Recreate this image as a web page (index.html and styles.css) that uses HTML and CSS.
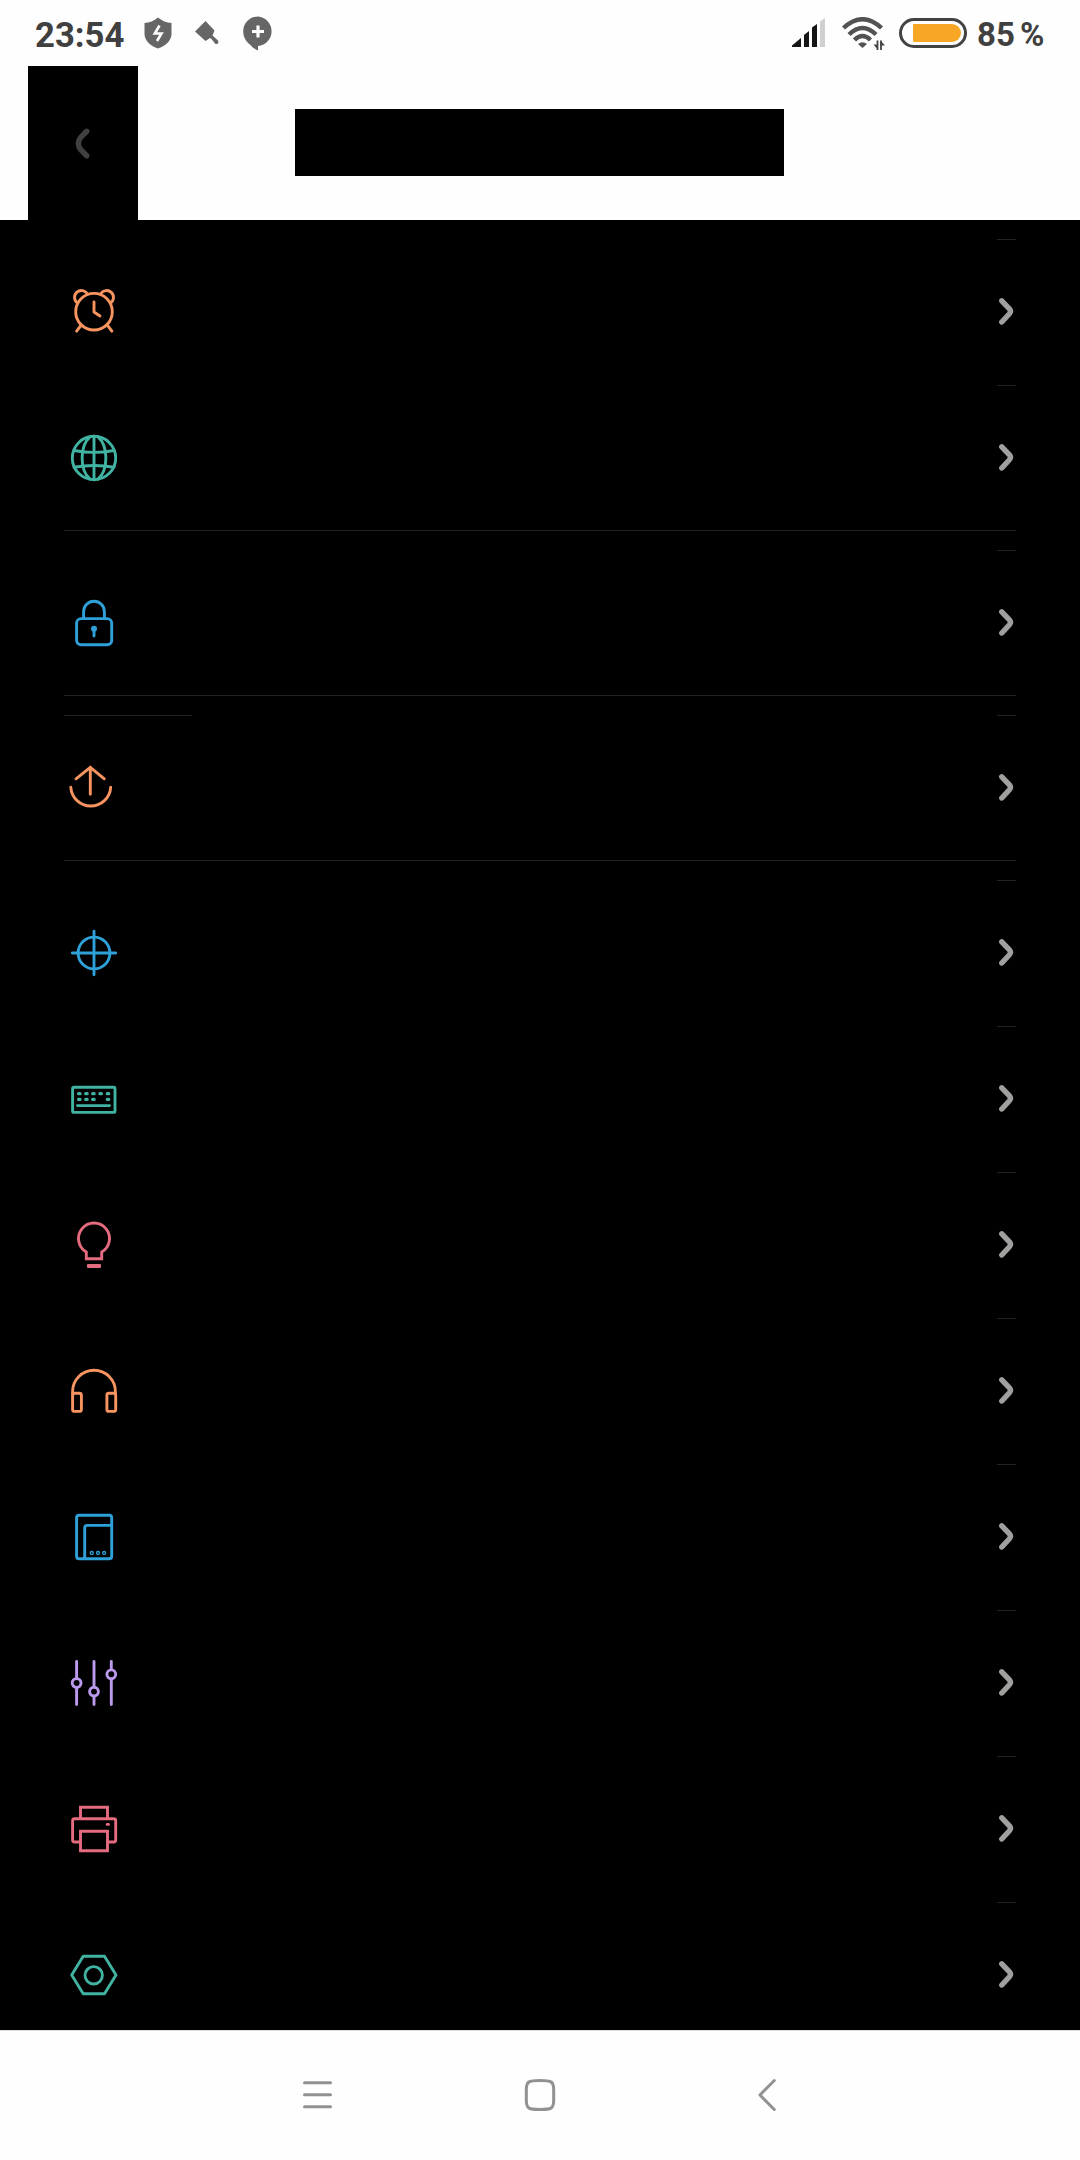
FILE: index.html
```html
<!DOCTYPE html>
<html lang="en">
<head>
    <meta charset="UTF-8">
    <meta name="viewport" content="width=device-width, initial-scale=1.0">
    <title>Settings</title>
    <link rel="stylesheet" href="styles.css">
</head>
<body>
    <!-- Status bar -->
    <div class="status-bar">
        <span class="clock">23:54</span>
        <svg class="shield" width="28" height="32" viewBox="0 0 28 32">
            <path d="M14 0.500C18 4 22.500 5.500 27.500 6V17C27.500 24 21 29 14 31.500C7 29 0.500 24 0.500 17V6C5.500 5.500 10 4 14 0.500Z" fill="#666"/>
            <path d="M15.500 8.500L10.800 16.500H17.500L13 24" fill="none" stroke="#fefefe" stroke-width="2.600"/>
        </svg>
        <svg class="brush" width="26" height="26" viewBox="0 0 26 26">
            <path d="M11.500 1L20.500 10.500L18.500 15.500L24 20.500Q25.500 24.500 21.500 24L17 18.500L16 18L11.500 21L1 11.500Z" fill="#666"/>
        </svg>
        <svg class="bubble" width="30" height="35" viewBox="0 0 30 35">
            <path d="M15 0.500A14.800 14.800 0 0 1 15 30V34.500C12 33.500 9 31 7.500 29C3 26 0.200 21 0.200 15.300A14.800 14.800 0 0 1 15 0.500Z" fill="#666"/>
            <path d="M15 9.500V21.500M9 15.500H21" stroke="#fefefe" stroke-width="3.200"/>
        </svg>
        <div class="spacer"></div>
        <svg class="signal" width="34" height="30" viewBox="0 0 34 30">
            <path d="M0 29V27.500L9 20V29ZM12 29V17L17 13V29ZM20 29V9.500L25 6V29Z" fill="#151515"/>
            <path d="M28 29V3.500L33 0V29Z" fill="#d0d0d0"/>
        </svg>
        <svg class="wifi" width="44" height="34" viewBox="0 0 44 34">
            <g fill="none" stroke="#525252" stroke-width="4.400">
                <path d="M2.500 11Q21.500 -6.500 40.500 11"/>
                <path d="M8 17.500Q21.500 4.500 35 17.500"/>
                <path d="M13.500 23Q21.500 15 29.500 23"/>
            </g>
            <path d="M17 27Q21.500 23.500 26 27L21.500 31Z" fill="#525252"/>
            <path d="M36.500 23.500V33M40 33V23.500" stroke="#444" stroke-width="1.800"/>
            <path d="M32.500 27.500H37V33ZM39.500 23.500L44 28.500H39.500Z" fill="#444"/>
        </svg>
        <svg class="battery" width="68" height="30" viewBox="0 0 68 30">
            <rect x="1.500" y="1.500" width="65" height="27" rx="13.500" fill="none" stroke="#424242" stroke-width="3"/>
            <path d="M15 6H53A9 9 0 0 1 53 24H15Q14 24 14 23V7Q14 6 15 6Z" fill="#f7a723"/>
        </svg>
        <span class="percent">85 %</span>
    </div>

    <!-- Title bar -->
    <div class="header">
        <div class="back">
            <svg width="20" height="34" viewBox="0 0 20 34">
                <path d="M14.700 5.300L9 11Q3.700 17.500 9 24L14.700 29.700" fill="none" stroke="#404040" stroke-width="5.500" stroke-linecap="round"/>
            </svg>
        </div>
        <div class="title"></div>
    </div>

    <!-- Chevron shared by all rows -->
    <svg class="defs">
        <symbol id="chevron" viewBox="0 0 19 30">
            <path d="M4.800 3.800L12.400 11.800Q14.600 14.300 12.400 16.800L4.800 25" fill="none" stroke="#a0a09e" stroke-width="5.400" stroke-linecap="round"/>
        </symbol>
    </svg>

    <div class="settings">
        <div class="group">
            <div class="row">
                <div class="icon orange">
                    <svg viewBox="0 0 48 48">
                        <circle cx="24" cy="23.700" r="18.300"/>
                        <path d="M7.500 15.100A6.900 6.900 0 1 1 17.300 5.800M40.500 15.100A6.900 6.900 0 1 0 30.700 5.800"/>
                        <path d="M24 14V24L30 28M11.300 37L6.600 43.200M37.200 37L41.900 43.200"/>
                    </svg>
                </div>
                <div class="arrow"><svg><use href="#chevron"/></svg></div>
            </div>
            <div class="row">
                <div class="icon green">
                    <svg viewBox="0 0 48 48">
                        <circle cx="24" cy="24" r="21.700"/>
                        <path d="M24 2.300V45.700M20 2.800C9.500 12 9.500 36 20 45.200M28 2.800C38.500 12 38.500 36 28 45.200"/>
                        <path d="M4 16.500Q24 20.300 44 16.500M4 33.200Q24 29.800 44 33.200"/>
                    </svg>
                </div>
                <div class="arrow"><svg><use href="#chevron"/></svg></div>
            </div>
        </div>

        <div class="group">
            <div class="row">
                <div class="icon blue">
                    <svg viewBox="0 0 48 48">
                        <rect x="6.600" y="19.600" width="35.100" height="26.100" rx="4.500"/>
                        <path d="M13.600 19.600V12.700A10.400 10.400 0 0 1 34.400 12.700V19.600"/>
                        <circle cx="24" cy="29.700" r="3" class="solid"/>
                        <path d="M24 30V37"/>
                    </svg>
                </div>
                <div class="arrow"><svg><use href="#chevron"/></svg></div>
            </div>
        </div>

        <div class="group">
            <div class="row">
                <div class="icon orange lined">
                    <svg viewBox="0 0 48 48">
                        <path d="M0.800 23.300A20 20.200 0 0 0 40.700 23.300"/>
                        <path d="M20.300 30.200V3.300M6 14.800L20.300 3.300L34.300 14.800"/>
                    </svg>
                </div>
                <div class="arrow"><svg><use href="#chevron"/></svg></div>
            </div>
        </div>

        <div class="group">
            <div class="row">
                <div class="icon blue">
                    <svg viewBox="0 0 48 48">
                        <circle cx="24" cy="24" r="15.900"/>
                        <path d="M24 2.300V45.700M2.300 24H45.700"/>
                    </svg>
                </div>
                <div class="arrow"><svg><use href="#chevron"/></svg></div>
            </div>
            <div class="row">
                <div class="icon green">
                    <svg viewBox="0 0 48 48">
                        <rect x="2.600" y="12.300" width="42.400" height="25.100" rx="1.500"/>
                        <path d="M7.500 30.600H39.500"/>
                        <path d="M8.600 18.700h1.400M15.700 18.700h1.400M22.700 18.700h1.400M30 18.700h1.400M37.300 18.700h1.400M8.600 24.400h1.400M15.700 24.400h1.400M22.700 24.400h1.400M37.300 24.400h1.400" class="keys"/>
                    </svg>
                </div>
                <div class="arrow"><svg><use href="#chevron"/></svg></div>
            </div>
            <div class="row">
                <div class="icon pink">
                    <svg viewBox="0 0 48 48">
                        <path d="M16.300 37.700V31A15.500 15.500 0 1 1 31.700 31V37.700Z" class="sharp"/>
                        <rect x="17" y="43" width="14" height="4" rx="1" class="solid"/>
                    </svg>
                </div>
                <div class="arrow"><svg><use href="#chevron"/></svg></div>
            </div>
            <div class="row">
                <div class="icon orange">
                    <svg viewBox="0 0 48 48">
                        <path d="M2.600 27V24.700A21.400 21.400 0 0 1 45.400 24.700V27"/>
                        <rect x="2.600" y="26.300" width="8.800" height="18.100" rx="2"/>
                        <rect x="36.900" y="26.300" width="8.800" height="18.100" rx="2"/>
                    </svg>
                </div>
                <div class="arrow"><svg><use href="#chevron"/></svg></div>
            </div>
            <div class="row">
                <div class="icon blue">
                    <svg viewBox="0 0 48 48">
                        <rect x="6.600" y="2.300" width="35.100" height="43.400" rx="2.500"/>
                        <path d="M14.700 45V15Q14.700 12.400 17.300 12.400H41"/>
                        <g class="dots">
                            <circle cx="21.800" cy="40" r="1.500"/>
                            <circle cx="28" cy="40" r="1.500"/>
                            <circle cx="34.100" cy="40" r="1.500"/>
                        </g>
                    </svg>
                </div>
                <div class="arrow"><svg><use href="#chevron"/></svg></div>
            </div>
            <div class="row">
                <div class="icon purple">
                    <svg viewBox="0 0 48 48">
                        <path d="M6.600 2.500V45.500M24 2.500V45.500M41.300 2.500V45.500"/>
                        <g fill="#000">
                            <circle cx="6.600" cy="24" r="4.400"/>
                            <circle cx="24" cy="32.600" r="4.400"/>
                            <circle cx="41.300" cy="15.300" r="4.400"/>
                        </g>
                    </svg>
                </div>
                <div class="arrow"><svg><use href="#chevron"/></svg></div>
            </div>
            <div class="row">
                <div class="icon pink">
                    <svg viewBox="0 0 48 48">
                        <path d="M10.500 13.700V2.300H37.500V13.700M10.500 26.300H37.500V45.700H10.500Z" class="sharp"/>
                        <path d="M10.500 37H4.600Q2.600 37 2.600 35V15.700Q2.600 13.700 4.600 13.700H43.700Q45.700 13.700 45.700 15.700V35Q45.700 37 43.700 37H37.500"/>
                        <path d="M37.200 19.400H38.500"/>
                    </svg>
                </div>
                <div class="arrow"><svg><use href="#chevron"/></svg></div>
            </div>
            <div class="row">
                <div class="icon green">
                    <svg viewBox="0 0 48 48">
                        <path d="M1.700 24L13.200 5.200H34.500L46 24L34.500 42.700H13.200Z"/>
                        <circle cx="23.700" cy="24.300" r="8.700"/>
                    </svg>
                </div>
                <div class="arrow"><svg><use href="#chevron"/></svg></div>
            </div>
        </div>
    </div>

    <!-- System navigation -->
    <div class="nav-bar">
        <svg width="34" height="34" viewBox="0 0 34 34">
            <path d="M4.500 4.700H30.500M4.500 16.700H30.500M4.500 28.700H30.500"/>
        </svg>
        <svg width="34" height="34" viewBox="0 0 34 34">
            <path d="M17 2.500C28 2.500 30.700 3 30.700 12V22C30.700 31 28 31.500 17 31.500C6 31.500 3.300 31 3.300 22V12C3.300 3 6 2.500 17 2.500Z"/>
        </svg>
        <svg width="34" height="34" viewBox="0 0 34 34">
            <path d="M28.300 2.500L14 17L28.300 31.500"/>
        </svg>
    </div>
</body>
</html>
```
FILE: styles.css
```css
* {
    box-sizing: border-box;
}
body {
    margin: 0;
    height: 2160px;
    display: flex;
    flex-direction: column;
    overflow: hidden;
    background-color: #fefefe;
    font-family: Roboto, sans-serif;
}
svg {
    display: block;
    flex-shrink: 0;
}
.defs {
    display: none;
}

/* Status bar */
.status-bar {
    display: flex;
    align-items: center;
    flex-shrink: 0;
    height: 66px;
    padding: 0 36px 0 35px;
    color: #404040;
    font-weight: 700;
    white-space: nowrap;
}
.clock {
    width: 109px;
    font-size: 34.7px;
    line-height: 66px;
    padding-top: 3px;
}
.brush {
    margin: 0 23px 0 22px;
}
.bubble {
    margin-top: 0;
}
.spacer {
    flex: 1;
}
.wifi {
    margin: 2px 14px 0 15px;
}
.battery {
    margin-right: 10px;
}
.percent {
    width: 67px;
    font-size: 33px;
    line-height: 66px;
    padding-top: 3px;
    word-spacing: -3px;
}

/* Title bar */
.header {
    display: flex;
    align-items: flex-start;
    flex-shrink: 0;
    height: 154px;
    padding-left: 28px;
}
.back {
    display: flex;
    align-items: center;
    width: 110px;
    height: 154px;
    padding-left: 44px;
    background-color: #000;
}
.title {
    width: 489px;
    height: 67px;
    margin: 43px 0 0 157px;
    background-color: #000;
}

/* Settings list */
.settings {
    flex: 1;
    min-height: 0;
    overflow: hidden;
    padding: 0 64px;
    background-color: #000;
}
.group {
    margin-top: 19px;
    border-bottom: 1px solid #222;
}
.row {
    display: flex;
    justify-content: space-between;
    height: 146px;
}
.row:last-child {
    height: 145px;
}
.icon {
    width: 128px;
    padding: 49px 0 0 6px;
}
.lined {
    border-top: 1px solid #222;
    padding-top: 48px;
}
.icon svg {
    width: 48px;
    height: 48px;
    overflow: visible;
    fill: none;
    stroke: currentColor;
    stroke-width: 2.9;
    stroke-linecap: round;
    stroke-linejoin: round;
}
.icon .solid {
    fill: currentColor;
    stroke: none;
}
.icon .sharp {
    stroke-linejoin: miter;
    stroke-linecap: butt;
}
.icon .keys {
    stroke-width: 3.3;
}
.icon .dots {
    stroke-width: 1.3;
}
.arrow {
    width: 19px;
    padding-top: 57px;
    border-top: 1px solid #222;
}
.arrow svg {
    width: 19px;
    height: 30px;
}
.orange {
    color: #f7945f;
}
.green {
    color: #40b3a2;
}
.blue {
    color: #2ea1d8;
}
.pink {
    color: #e56b7f;
}
.purple {
    color: #bb99ec;
}

/* System navigation */
.nav-bar {
    display: flex;
    justify-content: center;
    align-items: center;
    gap: 189px;
    flex-shrink: 0;
    height: 130px;
    padding-bottom: 1px;
    border-top: 1px solid #e0e0e0;
}
.nav-bar svg {
    fill: none;
    stroke: #919191;
    stroke-width: 3;
    stroke-linecap: round;
    stroke-linejoin: round;
}
```
